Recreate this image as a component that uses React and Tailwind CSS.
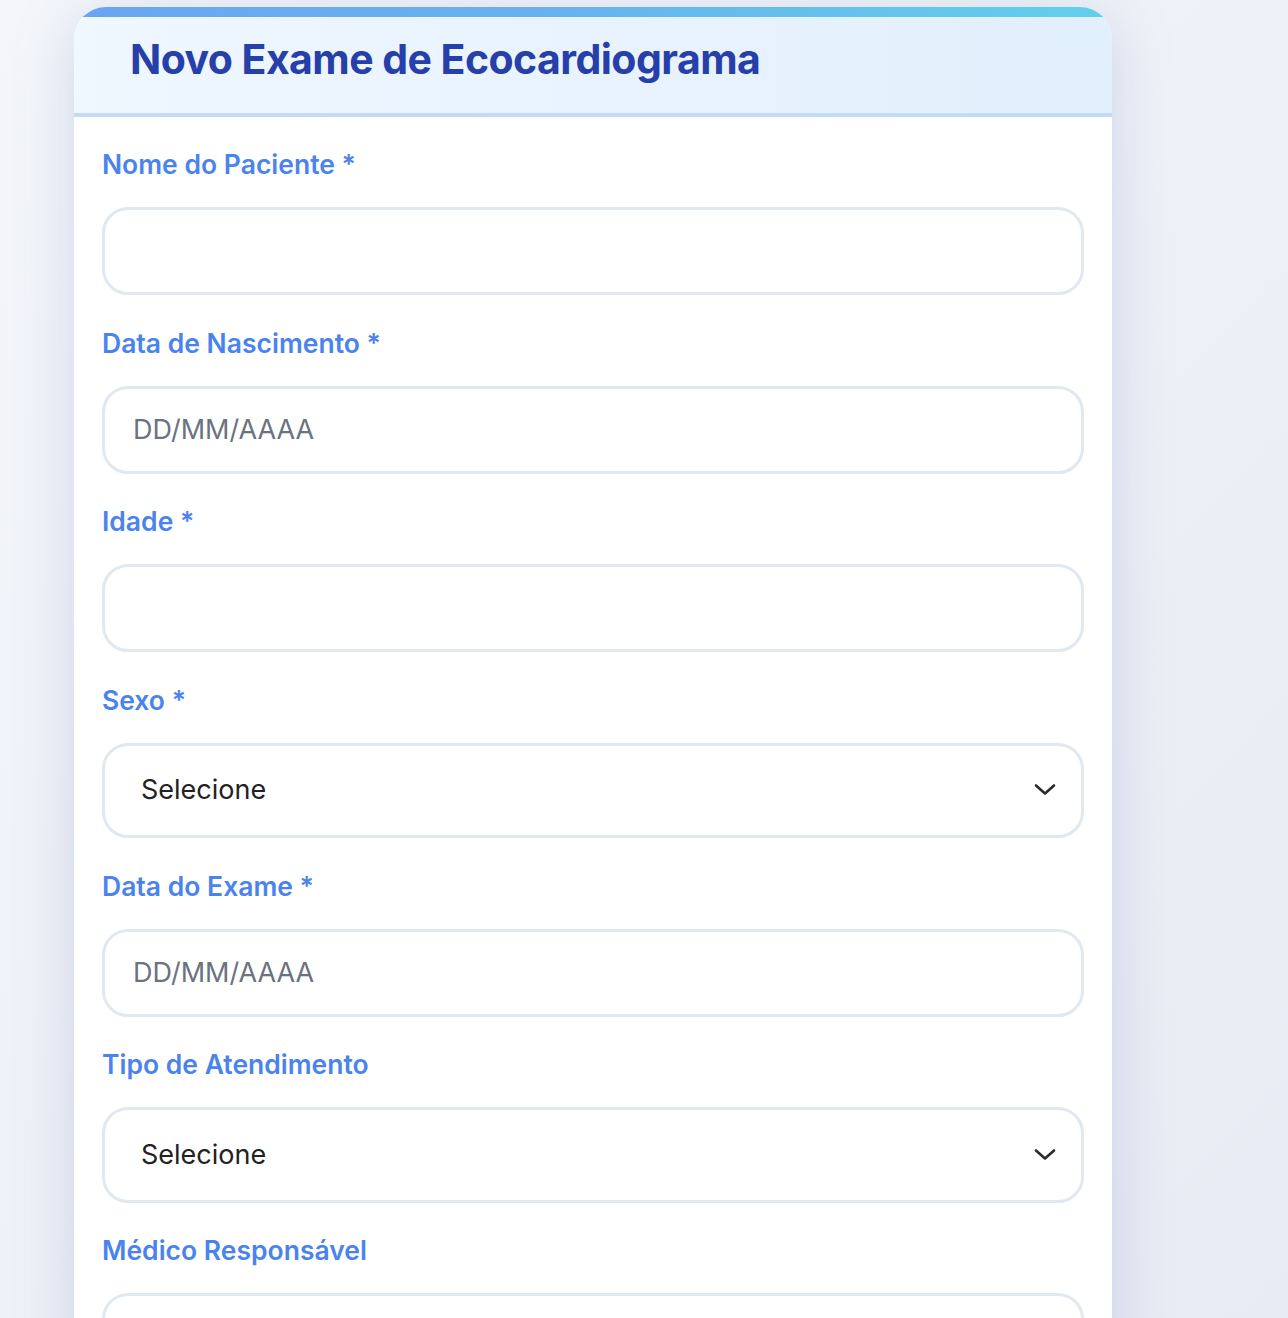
import React from "react";

function Campo({ label, placeholder }) {
  return (
    <div className="mb-[31.5px]">
      <label className="block text-[26.5px] leading-[32px] font-semibold text-[#4b83ee] mb-[27px]">{label}</label>
      <input
        type="text"
        placeholder={placeholder}
        className="w-full h-[88px] rounded-[26px] border-[3px] border-[#e2e8f0] bg-white px-[28px] text-[27px] text-[#222] placeholder:text-[#6b7280] outline-none"
      />
    </div>
  );
}

function Selecao({ label }) {
  return (
    <div className="mb-[31.5px]">
      <label className="block text-[26.5px] leading-[32px] font-semibold text-[#4b83ee] mb-[27px]">{label}</label>
      <div className="relative">
        <select className="w-full h-[95.5px] appearance-none rounded-[26px] border-[3px] border-[#e2e8f0] bg-white px-[36px] text-[27px] text-[#222] outline-none">
          <option>Selecione</option>
        </select>
        <svg className="pointer-events-none absolute right-[28px] top-1/2 -translate-y-1/2" width="22" height="14" viewBox="0 0 22 14" fill="none">
          <path d="M2 2.5l9 8 9-8" stroke="#2b2b2b" strokeWidth="2.6" strokeLinecap="round" strokeLinejoin="round" />
        </svg>
      </div>
    </div>
  );
}

export default function App() {
  return (
    <div
      className="h-[1318px] overflow-hidden bg-gradient-to-br from-[#f4f6fa] via-[#eef1f7] to-[#e7ebf3] pl-[74px] pt-[7px]"
      style={{ fontFamily: "Inter, 'Noto Sans', sans-serif" }}
    >
      <div className="w-[1038px] rounded-t-[32px] bg-white overflow-hidden shadow-[0_10px_60px_rgba(120,140,200,0.28)]">
        <div className="h-[10px] bg-gradient-to-r from-[#6aa5ef] via-[#67b4ee] to-[#62d0ea]" />
        <div className="h-[100px] border-b-4 border-[#c3dafa] bg-gradient-to-r from-[#eff7ff] to-[#e2effc] flex items-center pl-[56px] pb-[10px]">
          <h1 className="text-[41px] font-bold tracking-[-0.55px] text-[#263fa9]">Novo Exame de Ecocardiograma</h1>
        </div>
        <form className="px-[28px] pt-[31px]">
          <Campo label="Nome do Paciente *" placeholder="" />
          <Campo label="Data de Nascimento *" placeholder="DD/MM/AAAA" />
          <Campo label="Idade *" placeholder="" />
          <Selecao label="Sexo *" />
          <Campo label="Data do Exame *" placeholder="DD/MM/AAAA" />
          <Selecao label="Tipo de Atendimento" />
          <Campo label="Médico Responsável" placeholder="" />
        </form>
      </div>
    </div>
  );
}
